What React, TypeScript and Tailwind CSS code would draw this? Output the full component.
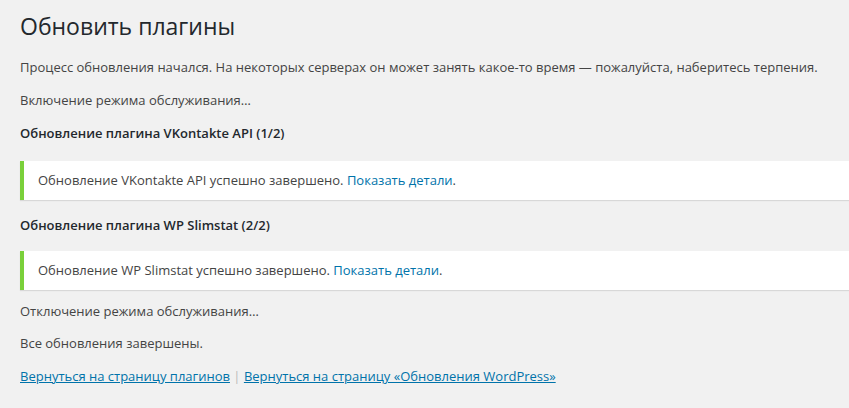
const NOTICE_CLASS =
  'mt-[17px] bg-white border-l-4 border-[#7ad03a] shadow-[0_1px_1px_0_rgba(0,0,0,0.1)] py-[10px] pl-[14px] pr-3'

function Notice({ plugin }: { plugin: string }) {
  return (
    <div className={NOTICE_CLASS}>
      Обновление {plugin} успешно завершено.{' '}
      <a href="#" className="text-[#0073aa] no-underline">
        Показать детали
      </a>
      .
    </div>
  )
}

export default function App() {
  return (
    <div
      className="min-h-[408px] bg-[#f1f1f1] text-[#444] text-[13px] leading-[19.5px] pl-5 pt-[12px]"
      style={{ fontFamily: '"Open Sans", "Noto Sans", sans-serif' }}
    >
      <h1 className="text-[23px] leading-[29px] font-normal text-[#23282d]">Обновить плагины</h1>

      <p className="mt-[17px]">
        Процесс обновления начался. На некоторых серверах он может занять какое-то время — пожалуйста, наберитесь терпения.
      </p>
      <p className="mt-[13.5px]">Включение режима обслуживания…</p>

      <h2 className="mt-[13.5px] font-semibold text-[#23282d]">Обновление плагина VKontakte API (1/2)</h2>
      <Notice plugin="VKontakte API" />

      <h2 className="mt-[16px] font-semibold text-[#23282d]">Обновление плагина WP Slimstat (2/2)</h2>
      <div className="mt-[-2px]">
        <Notice plugin="WP Slimstat" />
      </div>

      <p className="mt-[12px]">Отключение режима обслуживания…</p>
      <p className="mt-[12.5px]">Все обновления завершены.</p>

      <p className="mt-[13.5px]">
        <a href="#" className="text-[#0073aa] underline">
          Вернуться на страницу плагинов
        </a>
        <span className="text-[#bbb]"> | </span>
        <a href="#" className="text-[#0073aa] underline">
          Вернуться на страницу «Обновления WordPress»
        </a>
      </p>
    </div>
  )
}
